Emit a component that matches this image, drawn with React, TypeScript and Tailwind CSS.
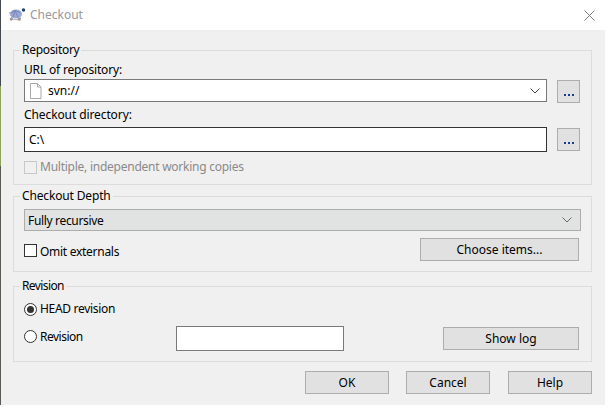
import React from "react";

const font = { fontFamily: '"Noto Sans", "Liberation Sans", sans-serif' };

function Group({ title, track, className, children }: { title: string; track: string; className: string; children: React.ReactNode }) {
  return (
    <fieldset className={`border border-[#dcdcdc] w-[579px] ${className}`}>
      <legend className={`ml-[6px] px-[2px] text-[12px] leading-[14px] text-black ${track}`}>{title}</legend>
      <div className="pl-[10px]">{children}</div>
    </fieldset>
  );
}

function Btn({ children, className }: { children: React.ReactNode; className: string }) {
  return (
    <div className={`shrink-0 flex items-center justify-center bg-[#e1e1e1] border border-[#adadad] text-[12px] text-black ${className}`}>
      {children}
    </div>
  );
}

function Dots() {
  return (
    <Btn className="w-[23px] h-[23px] ml-[10px] mt-[1px] gap-[2px] pt-[6px]">
      <span className="w-[2px] h-[2px] bg-[#1a3a8a]" />
      <span className="w-[2px] h-[2px] bg-[#1a3a8a]" />
      <span className="w-[2px] h-[2px] bg-[#1a3a8a]" />
    </Btn>
  );
}

function Chevron({ color }: { color: string }) {
  return (
    <svg width="10" height="6" viewBox="0 0 10 6" fill="none" stroke={color} strokeWidth="1">
      <path d="M0.5 0.5 L5 5 L9.5 0.5" />
    </svg>
  );
}

function Radio({ checked }: { checked?: boolean }) {
  return (
    <span className="w-[13px] h-[13px] shrink-0 rounded-full border border-[#333333] bg-white flex items-center justify-center">
      {checked && <span className="w-[7px] h-[7px] rounded-full bg-[#333333]" />}
    </span>
  );
}

function Turtle() {
  return (
    <svg width="17" height="14" viewBox="0 0 17 14" className="shrink-0">
      <ellipse cx="7" cy="6" rx="6" ry="4.5" fill="#9aa8d8" />
      <path d="M2 5 L6 2.5 L11 4.5 M4 9 L6 2.5 L9 9.5" stroke="#6f7fb0" strokeWidth="0.8" fill="none" />
      <circle cx="14.5" cy="2" r="1.7" fill="#25406e" />
      <path d="M2.5 9 L0.5 11 L2 13 L4.5 11 Z M9 10 L8.5 12.5 L11.5 12.5 L12 9.5 Z" fill="#969696" />
      <path d="M4 11.5 H9" stroke="#b8b8b8" strokeWidth="1" />
      <circle cx="1" cy="5" r="1" fill="#a5afd0" />
    </svg>
  );
}

export default function App() {
  return (
    <div className="w-[608px] h-[420px] bg-white flex text-black overflow-hidden" style={font}>
      <div className="w-px h-[405px] flex flex-col shrink-0">
        <div className="h-[86px] bg-[#454a50]" />
        <div className="h-[80px] bg-[#8aa35c]" />
        <div className="flex-1 bg-[#5a5a55]" />
      </div>
      <div className="w-[604px] shrink-0">
        <div className="h-[30px] flex items-center pl-[8px] pr-[10px] bg-white">
          <Turtle />
          <span className="ml-[4px] text-[12px] text-[#999999]">Checkout</span>
          <svg width="11" height="11" viewBox="0 0 11 11" className="ml-auto" stroke="#6e6e6e" strokeWidth="0.9" fill="none">
            <path d="M0.5 0.5 L10.5 10.5 M10.5 0.5 L0.5 10.5" />
          </svg>
        </div>
        <div className="h-[375px] bg-[#f0f0f0] pl-[12px] pt-[13px]">
          <Group title="Repository" track="tracking-[-0.3px]" className="h-[142px]">
            <div className="text-[12px] leading-[16px] mt-[5px] tracking-[-0.17px]">URL of repository:</div>
            <div className="flex items-start mt-[1px]">
              <div className="w-[523px] h-[23px] bg-white border border-[#7a7a7a] flex items-center pl-[4px] pr-[6px] text-[12px]">
                <svg width="13" height="16" viewBox="0 0 13 16" fill="#ffffff" stroke="#a8a8a8" strokeWidth="1">
                  <path d="M1.5 0.5 H8.5 L12 4 V15.5 H1.5 Z M8.5 0.5 V4 H12" />
                </svg>
                <span className="ml-[6px]">svn://</span>
                <span className="ml-auto flex"><Chevron color="#444444" /></span>
              </div>
              <Dots />
            </div>
            <div className="text-[12px] leading-[16px] mt-[4px] tracking-[-0.1px]">Checkout directory:</div>
            <div className="flex items-start mt-[4px]">
              <div className="w-[523px] h-[25px] bg-white border border-[#333333] flex items-center pl-[4px] text-[12px]">C:\</div>
              <Dots />
            </div>
            <div className="flex items-center mt-[7px]">
              <span className="w-[13px] h-[13px] border border-[#c8c8c8] bg-[#f0f0f0]" />
              <span className="ml-[3px] text-[12px] leading-[16px] text-[#8a8a8a] tracking-[-0.25px]">Multiple, independent working copies</span>
            </div>
          </Group>
          <Group title="Checkout Depth" track="tracking-[-0.15px]" className="h-[83px] mt-[4px]">
            <div className="w-[557px] h-[22px] mt-[6px] bg-[#e1e3e3] border border-[#adadad] flex items-center pl-[3px] pr-[8px] text-[12px]">
              <span className="tracking-[-0.33px] pt-[1px]">Fully recursive</span>
              <span className="ml-auto flex"><Chevron color="#666666" /></span>
            </div>
            <div className="flex items-start w-[555px] mt-[7px]">
              <span className="w-[13px] h-[13px] mt-[6px] border border-[#333333] bg-white" />
              <span className="ml-[3px] mt-[6px] text-[12px] leading-[16px] tracking-[-0.28px]">Omit externals</span>
              <Btn className="ml-auto w-[159px] h-[23px]">Choose items...</Btn>
            </div>
          </Group>
          <Group title="Revision" track="tracking-[-0.6px]" className="h-[83px] mt-[7px]">
            <div className="flex items-center mt-[7px] h-[18px]">
              <Radio checked />
              <span className="ml-[3px] text-[12px] tracking-[-0.3px]">HEAD revision</span>
            </div>
            <div className="flex items-start w-[555px] mt-[8px]">
              <span className="mt-[4px]"><Radio /></span>
              <span className="ml-[3px] mt-[3px] leading-[16px] text-[12px] w-[136px] tracking-[-0.5px]">Revision</span>
              <div className="w-[168px] h-[25px] bg-white border border-[#7a7a7a]" />
              <Btn className="ml-auto mt-[1px] w-[136px] h-[23px]">Show log</Btn>
            </div>
          </Group>
          <div className="flex w-[579px] mt-[9px]">
            <Btn className="ml-[292px] w-[84px] h-[23px]">OK</Btn>
            <Btn className="ml-[17px] w-[84px] h-[23px]">Cancel</Btn>
            <Btn className="ml-[18px] w-[84px] h-[23px]">Help</Btn>
          </div>
        </div>
      </div>
    </div>
  );
}
